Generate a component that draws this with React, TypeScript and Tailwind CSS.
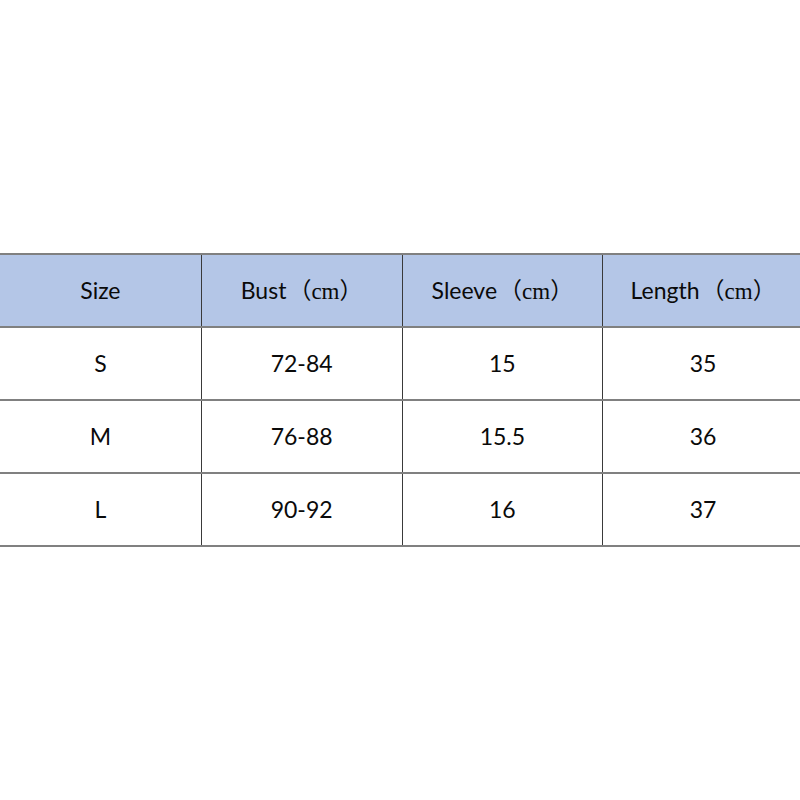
const HEADERS = ['Size', 'Bust', 'Sleeve', 'Length']

const ROWS = [
  ['S', '72-84', '15', '35'],
  ['M', '76-88', '15.5', '36'],
  ['L', '90-92', '16', '37'],
]

function Unit() {
  return (
    <span className="font-['Noto_Sans_CJK_SC',sans-serif] ml-[2px]">
      （<span className="font-['Liberation_Serif',serif] text-[23px]">cm</span>）
    </span>
  )
}

export default function App() {
  return (
    <div className="w-[800px] h-[800px] bg-white pt-[253px] overflow-hidden font-['Lato','Noto_Sans',sans-serif] text-[23px] text-[#0a0a0a]">
      <div className="w-[803px] border-b-2 border-[#808080]">
        {/* Header */}
        <div className="grid grid-cols-4 h-[73px] bg-[#b4c6e7] border-t-2 border-[#808080]">
          {HEADERS.map((h, i) => (
            <div
              key={h}
              className={`flex items-center justify-center ${i > 0 ? 'border-l border-[#3a3a3a]' : ''}`}
            >
              {h}
              {i > 0 && <Unit />}
            </div>
          ))}
        </div>

        {ROWS.map((row) => (
          <div key={row[0]} className="grid grid-cols-4 h-[73px] border-t-2 border-[#808080]">
            {row.map((cell, i) => (
              <div
                key={i}
                className={`flex items-center justify-center ${i > 0 ? 'border-l border-[#3a3a3a]' : ''}`}
              >
                {cell}
              </div>
            ))}
          </div>
        ))}
      </div>
    </div>
  )
}
